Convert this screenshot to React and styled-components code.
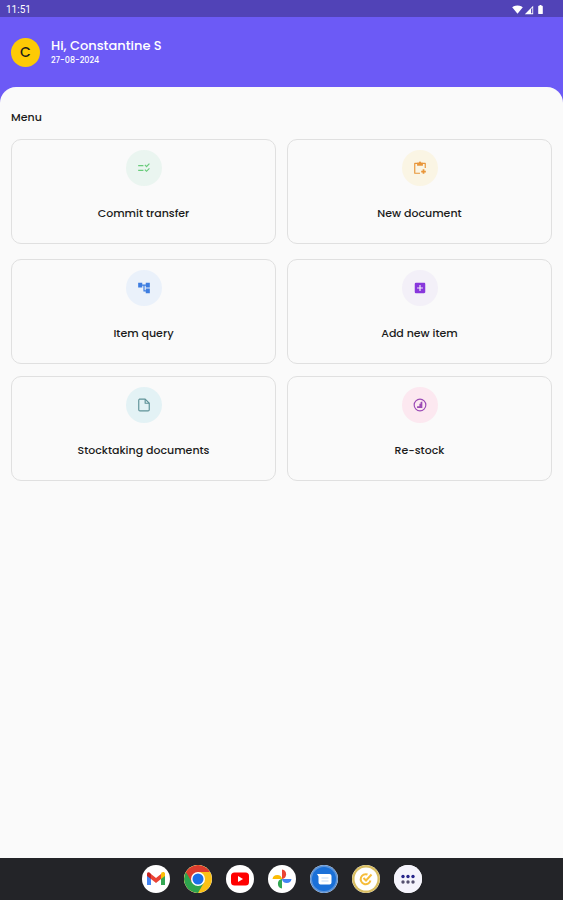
import React from 'react'
import styled, { createGlobalStyle } from 'styled-components'
import {
    MdSignalWifi4Bar,
    MdNetworkCell,
    MdBatteryFull,
    MdChecklistRtl,
    MdAccountTree,
    MdAddBox,
} from 'react-icons/md'

const GlobalStyle = createGlobalStyle`
    *, *:before, *:after {
        box-sizing: border-box;
    }

    body {
        margin: 0;
        background-color: #fafafa;
        color: #1b1b1b;
        font-family: Poppins, Inter, "Liberation Sans", sans-serif;
    }
`

const Screen = styled.div`
    display: flex;
    flex-direction: column;
    min-height: 100vh;
    background-color: #6c5af6;
`

const StatusBar = styled.div`
    display: flex;
    align-items: center;
    justify-content: space-between;
    height: 17px;
    padding: 2px 17px 0 6px;
    background-color: #5143b7;
    color: #fff;
    font-family: Roboto, sans-serif;
    font-size: 10px;
    line-height: 15px;
`

const StatusIcons = styled.div`
    display: flex;
    align-items: center;
    gap: 1px;
`

const Header = styled.header`
    display: flex;
    align-items: center;
    gap: 11px;
    height: 70px;
    padding: 0 11px;
    color: #fff;
`

const Avatar = styled.div`
    display: flex;
    align-items: center;
    justify-content: center;
    width: 29px;
    height: 29px;
    border-radius: 50%;
    background-color: #fdca05;
    color: #1b1b1b;
    font-size: 14px;
    font-weight: 500;
`

const Greeting = styled.h1`
    margin: 0;
    font-size: 13px;
    font-weight: 500;
    line-height: 17px;
`

const DateText = styled.time`
    display: block;
    font-size: 8px;
    font-weight: 500;
    line-height: 13px;
`

const Content = styled.main`
    flex: 1;
    padding: 21px 11px;
    border-radius: 16px 16px 0 0;
    background-color: #fafafa;
`

const Title = styled.h2`
    margin: 0 0 12px;
    font-size: 11px;
    font-weight: 500;
    line-height: 19px;
`

const MenuGrid = styled.div`
    display: grid;
    grid-template-columns: 1fr 1fr;
    gap: 15px 11px;

    & + & {
        margin-top: 12px;
    }
`

const Card = styled.button`
    display: flex;
    flex-direction: column;
    align-items: center;
    gap: 18px;
    height: 105px;
    padding: 10px 8px;
    border: 1px solid #e0e0e0;
    border-radius: 10px;
    background-color: transparent;
    color: #1b1b1b;
    font-family: inherit;
    font-size: 11px;
    font-weight: 500;
    line-height: 19px;
    cursor: pointer;
`

const IconCircle = styled.span`
    display: flex;
    align-items: center;
    justify-content: center;
    width: 36px;
    height: 36px;
    border-radius: 50%;
    background-color: ${({ $background }) => $background};
    color: ${({ $color }) => $color};
    font-size: 14px;
`

const Taskbar = styled.nav`
    display: flex;
    align-items: center;
    justify-content: center;
    gap: 14px;
    height: 42px;
    background-color: #232428;
`

const AppButton = styled.button`
    display: flex;
    width: 28px;
    height: 28px;
    padding: 0;
    border: 0;
    border-radius: 50%;
    overflow: hidden;
    background-color: #fff;
    cursor: pointer;

    svg {
        width: 100%;
        height: 100%;
    }
`

const ClipboardAddIcon = () => (
    <svg width="1em" height="1em" viewBox="0 0 24 24" fill="none" stroke="currentColor" strokeWidth="2">
        <path d="M12 21H3V4h18v8" strokeLinejoin="round" />
        <path d="M7 3h3a2 2 0 0 1 4 0h3v5H7z" fill="currentColor" stroke="none" />
        <path d="M18 14v8M14 18h8" strokeWidth="3" />
    </svg>
)

const DocumentIcon = () => (
    <svg width="1em" height="1em" viewBox="0 0 24 24" fill="none" stroke="currentColor" strokeWidth="2" strokeLinejoin="round">
        <path d="M4 2h10l7 7v11a2 2 0 0 1-2 2H5a2 2 0 0 1-2-2V4a2 2 0 0 1 1-2z" />
        <path d="M14 2v7h7" />
    </svg>
)

const RestockIcon = () => (
    <svg width="1em" height="1em" viewBox="0 0 24 24" fill="none" stroke="currentColor" strokeWidth="2">
        <circle cx="12" cy="12" r="10" />
        <path d="M16 6v11H7v-3h4v-4h2V7z" fill="currentColor" stroke="none" />
    </svg>
)

const GmailIcon = () => (
    <svg viewBox="0 0 28 28">
        <path d="M5 10v10h4v-8z" fill="#4285f4" />
        <path d="M19 12v8h4V10z" fill="#34a853" />
        <path d="M19 9v5l4-3V9c0-2-2-2.500-3.500-1.400z" fill="#fbbc04" />
        <path d="M9 9v5l5 4 5-4V9l-5 4z" fill="#ea4335" />
        <path d="M5 9v2l4 3V9L8 7.800C6.800 6.600 5 7 5 9z" fill="#c5221f" />
    </svg>
)

const ChromeIcon = () => (
    <svg viewBox="0 0 28 28">
        <circle cx="14" cy="14" r="14" fill="#fbc116" />
        <path d="M14 14L1.900 7A14 14 0 0 0 14 28l6-10.500z" fill="#2da44e" />
        <path d="M1.900 7A14 14 0 0 1 26.100 7H14L8 17.500z" fill="#dc3c2e" />
        <circle cx="14" cy="14" r="7" fill="#fff" />
        <circle cx="14" cy="14" r="5.500" fill="#1a6fe8" />
    </svg>
)

const YoutubeIcon = () => (
    <svg viewBox="0 0 28 28">
        <rect x="5" y="7.500" width="18" height="13" rx="3.500" fill="#f00" />
        <path d="M12 11v6l5-3z" fill="#fff" />
    </svg>
)

const PhotosIcon = () => (
    <svg viewBox="0 0 28 28">
        <path d="M14 14V4.500a4.800 4.800 0 0 1 0 9.500z" fill="#ea4335" />
        <path d="M14 14H4.500a4.800 4.800 0 0 1 9.500 0z" fill="#fbbc04" />
        <path d="M14 14v9.500a4.800 4.800 0 0 1 0-9.500z" fill="#34a853" />
        <path d="M14 14h9.500a4.800 4.800 0 0 1-9.500 0z" fill="#4285f4" />
    </svg>
)

const MessagesIcon = () => (
    <svg viewBox="0 0 28 28">
        <circle cx="14" cy="14" r="14" fill="#5d94d8" />
        <circle cx="14" cy="14" r="12" fill="#1a70d8" />
        <path d="M7 9h12.500a2 2 0 0 1 2 2v6.500a2 2 0 0 1-2 2h-9a2 2 0 0 1-2-2V11.500z" fill="#fff" />
        <path d="M11.500 13h7M11.500 16h7" stroke="#c3dbf7" />
    </svg>
)

const TasksIcon = () => (
    <svg viewBox="0 0 28 28">
        <circle cx="14" cy="14" r="14" fill="#d8bd62" />
        <circle cx="14" cy="14" r="11.500" fill="#fff" />
        <path d="M15.500 9.500a5 5 0 1 0 3 6" fill="none" stroke="#f6bd3b" strokeWidth="2" />
        <path d="M11.500 13l2.500 2.500 5.500-6" fill="none" stroke="#f6bd3b" strokeWidth="2" />
    </svg>
)

const AppsIcon = () => (
    <svg viewBox="0 0 28 28">
        <rect width="28" height="28" fill="#f5f4fc" />
        {[9, 14, 19].map((x) => (
            <React.Fragment key={x}>
                <circle cx={x} cy="11.500" r="1.700" fill="#29278c" />
                <circle cx={x} cy="17" r="1.700" fill="#55516f" />
            </React.Fragment>
        ))}
    </svg>
)

const mainItems = [
    { label: 'Commit transfer', icon: MdChecklistRtl, color: '#69cc7b', background: '#eaf5f0' },
    { label: 'New document', icon: ClipboardAddIcon, color: '#e8963a', background: '#faf5e4' },
    { label: 'Item query', icon: MdAccountTree, color: '#3d7de0', background: '#eaf1fa' },
    { label: 'Add new item', icon: MdAddBox, color: '#8837dc', background: '#f3f0f8' },
]

const stockItems = [
    { label: 'Stocktaking documents', icon: DocumentIcon, color: '#5f9298', background: '#e3f2f5' },
    { label: 'Re-stock', icon: RestockIcon, color: '#9b4bb5', background: '#fce8f0' },
]

const apps = [
    { name: 'Gmail', icon: GmailIcon },
    { name: 'Chrome', icon: ChromeIcon },
    { name: 'YouTube', icon: YoutubeIcon },
    { name: 'Photos', icon: PhotosIcon },
    { name: 'Messages', icon: MessagesIcon },
    { name: 'Tasks', icon: TasksIcon },
    { name: 'All apps', icon: AppsIcon },
]

const Menu = ({ items }) => (
    <MenuGrid>
        {items.map(({ label, icon: Icon, color, background }) => (
            <Card key={label} type="button">
                <IconCircle $color={color} $background={background}>
                    <Icon />
                </IconCircle>
                {label}
            </Card>
        ))}
    </MenuGrid>
)

const App = () => {
    return (
        <>
            <GlobalStyle />
            <Screen>
                <StatusBar>
                    <span>11:51</span>
                    <StatusIcons>
                        <MdSignalWifi4Bar size={11} />
                        <MdNetworkCell size={10} />
                        <MdBatteryFull size={11} />
                    </StatusIcons>
                </StatusBar>
                <Header>
                    <Avatar>C</Avatar>
                    <div>
                        <Greeting>Hi, Constantine S</Greeting>
                        <DateText dateTime="2024-08-27">27-08-2024</DateText>
                    </div>
                </Header>
                <Content>
                    <Title>Menu</Title>
                    <Menu items={mainItems} />
                    <Menu items={stockItems} />
                </Content>
                <Taskbar>
                    {apps.map(({ name, icon: Icon }) => (
                        <AppButton key={name} type="button" aria-label={name}>
                            <Icon />
                        </AppButton>
                    ))}
                </Taskbar>
            </Screen>
        </>
    )
}

export default App
